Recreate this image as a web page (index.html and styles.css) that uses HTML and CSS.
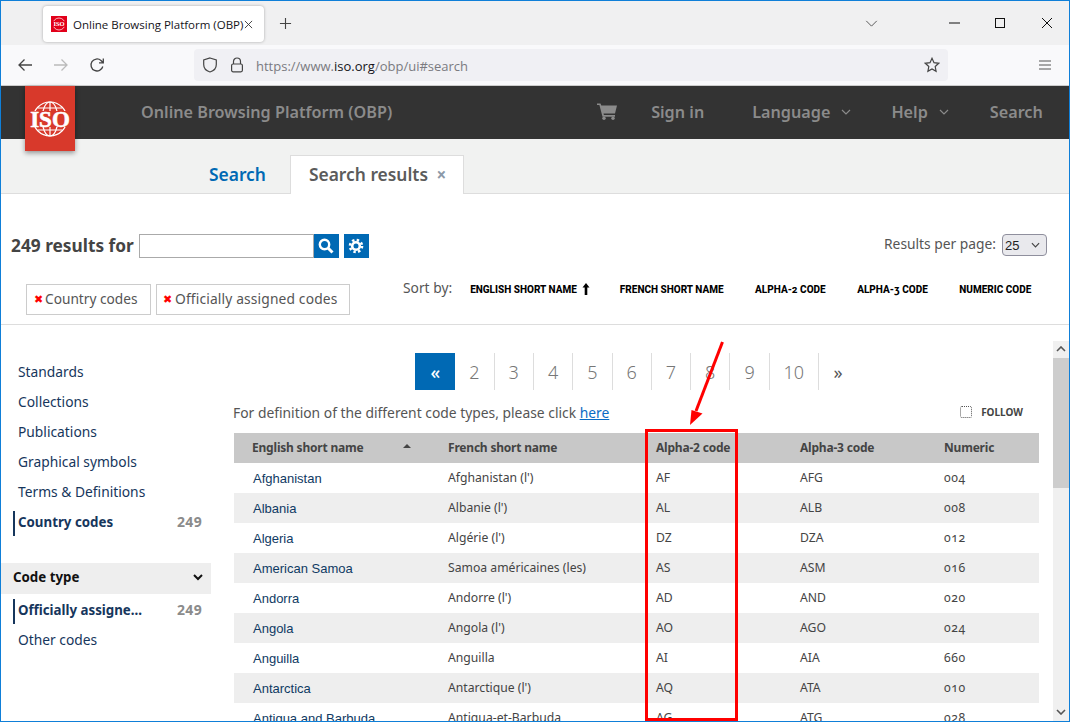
FILE: index.html
```html
<!DOCTYPE html>
<html lang="en">
<head>
<meta charset="utf-8">
<title>Online Browsing Platform (OBP)</title>
<link rel="stylesheet" href="styles.css">
</head>
<body>
<div class="window">
  <div class="tabbar">
    <div class="tab">
      <svg class="favicon" viewBox="0 0 16 16"><rect width="16" height="16" fill="#e2001a"/><circle cx="8" cy="8" r="6" fill="none" stroke="#fff" stroke-width=".7"/><rect x="1" y="5.2" width="14" height="5.6" fill="#e2001a"/><text x="8" y="10.4" class="favtext">ISO</text></svg>
      <span class="tab-title">Online Browsing Platform (OBP)</span>
      <svg class="tab-close" viewBox="0 0 10 10"><path d="M1 1l8 8M9 1l-8 8" stroke="#333" fill="none"/></svg>
    </div>
    <svg class="newtab" viewBox="0 0 14 14"><path d="M7 1v12M1 7h12" stroke="#444" stroke-width="1.2" fill="none"/></svg>
    <svg class="tablist" viewBox="0 0 14 8"><path d="M1 1l6 6 6-6" stroke="#555" stroke-width="1.1" fill="none"/></svg>
    <svg class="wc wc-min" viewBox="0 0 12 12"><path d="M0 6h11" stroke="#111" fill="none"/></svg>
    <svg class="wc wc-max" viewBox="0 0 12 12"><rect x="1.5" y="1.5" width="9" height="9" stroke="#111" fill="none"/></svg>
    <svg class="wc wc-close" viewBox="0 0 12 12"><path d="M1 1l10 10M11 1L1 11" stroke="#111" fill="none"/></svg>
  </div>

  <div class="toolbar">
    <svg class="tb tb-back" viewBox="0 0 16 16"><path d="M15 8H2M7.5 2.5L2 8l5.5 5.5" stroke="#444" stroke-width="1.3" fill="none"/></svg>
    <svg class="tb tb-fwd" viewBox="0 0 16 16"><path d="M1 8h13M8.500 2.500L14 8l-5.500 5.500" stroke="#bbb" stroke-width="1.3" fill="none"/></svg>
    <svg class="tb tb-reload" viewBox="0 0 16 16"><path d="M13.800 9.500A6 6 0 1 1 12 3.500L14 5.500M14.300 1.500v4.300h-4.300" stroke="#444" stroke-width="1.3" fill="none"/></svg>
    <div class="urlbar">
      <svg class="ub-shield" viewBox="0 0 16 16"><path d="M8 1l6.300 2v4.500C14.300 11.300 11.500 14 8 15 4.500 14 1.700 11.300 1.700 7.500V3z" stroke="#444" stroke-width="1.200" fill="none"/></svg>
      <svg class="ub-lock" viewBox="0 0 14 16"><path d="M3.500 7V4.500a3.500 3.500 0 0 1 7 0V7" stroke="#444" stroke-width="1.200" fill="none"/><rect x="1.600" y="7" width="10.800" height="7.800" rx="1.500" stroke="#444" stroke-width="1.200" fill="none"/></svg>
      <span class="url"><span class="url-dim">https://www.</span><span class="url-host">iso.org</span><span class="url-dim">/obp/ui#search</span></span>
      <svg class="ub-star" viewBox="0 0 16 16"><path d="M8 1.300l2 4.400 4.700.6-3.500 3.200.9 4.800L8 12l-4.100 2.300.9-4.800L1.300 6.300 6 5.700z" stroke="#444" stroke-width="1.200" fill="none"/></svg>
    </div>
    <svg class="tb-menu" viewBox="0 0 12 10"><path d="M0 1h12M0 5h12M0 9h12" stroke="#555" fill="none"/></svg>
  </div>

  <header class="site-header">
    <div class="logo">
      <svg viewBox="0 0 50 50" class="logo-svg">
        <g fill="none" stroke="#fff" stroke-width="1.200">
          <circle cx="25" cy="25" r="17"/>
          <ellipse cx="25" cy="25" rx="8" ry="17"/>
          <path d="M25 8v34M13 14h24M13 36h24"/>
        </g>
        <rect x="2" y="17" width="46" height="16" fill="#d8392b"/>
        <text x="25" y="33" class="logo-text">ISO</text>
      </svg>
    </div>
    <span class="site-title">Online Browsing Platform (OBP)</span>
    <nav class="site-nav">
      <svg class="cart" viewBox="0 0 20 17"><path d="M0 .5h3.500l.8 2H20l-2 8H6.500l.4 1.600H18v1.600H5.500L2.400 2.100H0z" fill="#8b8b8b"/><circle cx="7" cy="15.300" r="1.700" fill="#8b8b8b"/><circle cx="16" cy="15.300" r="1.700" fill="#8b8b8b"/></svg>
      <a class="nav-item nav-signin">Sign in</a>
      <a class="nav-item nav-lang">Language</a>
      <svg class="nav-chev" viewBox="0 0 10 6"><path d="M1 1l4 4 4-4" stroke="#8b8b8b" stroke-width="1.200" fill="none"/></svg>
      <a class="nav-item nav-help">Help</a>
      <svg class="nav-chev" viewBox="0 0 10 6"><path d="M1 1l4 4 4-4" stroke="#8b8b8b" stroke-width="1.200" fill="none"/></svg>
      <a class="nav-item nav-search">Search</a>
    </nav>
  </header>

  <div class="subnav">
    <a class="subnav-link">Search</a>
    <div class="subnav-tab">Search results <span class="subnav-x">×</span></div>
  </div>

  <section class="results-head">
    <div class="search-row">
      <h1 class="results-count">249 results for</h1>
      <input class="search-input" type="text" aria-label="Search">
      <button class="sq-btn" aria-label="Search"><svg viewBox="0 0 16 16" class="sq-icon"><circle cx="6.500" cy="6.500" r="4.700" stroke="#fff" stroke-width="2.400" fill="none"/><path d="M10 10l4.500 4.500" stroke="#fff" stroke-width="3" fill="none"/></svg></button>
      <button class="sq-btn gear-btn" aria-label="Settings"><svg viewBox="0 0 16 16" class="sq-icon"><circle cx="8" cy="8" r="6" stroke="#fff" stroke-width="2.600" stroke-dasharray="2.400 2.310" fill="none"/><circle cx="8" cy="8" r="3.800" stroke="#fff" stroke-width="2.600" fill="none"/></svg></button>
      <span class="per-page-label">Results per page:</span>
      <div class="per-page"><span>25</span><svg viewBox="0 0 10 6" class="pp-chev"><path d="M1 1l4 4 4-4" stroke="#444" stroke-width="1.300" fill="none"/></svg></div>
    </div>
    <div class="filter-row">
      <div class="chip chip-country"><span class="chip-x">✖</span>Country codes</div>
      <div class="chip chip-official"><span class="chip-x">✖</span>Officially assigned codes</div>
      <div class="sort">
        <span class="sort-label">Sort by:</span>
        <span class="sort-item sort-first">ENGLISH SHORT NAME<svg class="sort-arrow" viewBox="0 0 8 12"><path d="M4 0l3.500 4.500H5.300V12H2.700V4.500H.5z" fill="#000"/></svg></span>
        <span class="sort-item">FRENCH SHORT NAME</span>
        <span class="sort-item">ALPHA-2 CODE</span>
        <span class="sort-item">ALPHA-3 CODE</span>
        <span class="sort-item">NUMERIC CODE</span>
      </div>
    </div>
  </section>

  <main class="main">
    <aside class="sidebar">
      <a class="side-item">Standards</a>
      <a class="side-item">Collections</a>
      <a class="side-item">Publications</a>
      <a class="side-item">Graphical symbols</a>
      <a class="side-item">Terms &amp; Definitions</a>
      <a class="side-item active">Country codes<span class="side-count">249</span></a>
      <div class="side-head">Code type<svg viewBox="0 0 10 7" class="side-chev"><path d="M1 1l4 4 4-4" stroke="#111" stroke-width="2" fill="none"/></svg></div>
      <a class="side-item active">Officially assigne...<span class="side-count">249</span></a>
      <a class="side-item">Other codes</a>
    </aside>

    <div class="content">
      <div class="pager">
        <a class="page current">«</a>
        <a class="page">2</a><a class="page">3</a><a class="page">4</a><a class="page">5</a><a class="page">6</a><a class="page">7</a><a class="page">8</a><a class="page">9</a><a class="page page-10">10</a><a class="page page-next">»</a>
      </div>
      <div class="def-row">
        <span>For definition of the different code types, please click <a class="def-link">here</a></span>
        <label class="follow"><span class="follow-box"></span>FOLLOW</label>
      </div>
      <table class="codes">
        <thead>
          <tr><th class="c1">English short name<span class="sort-caret"></span></th><th class="c2">French short name</th><th class="c3">Alpha-2 code</th><th class="c4">Alpha-3 code</th><th class="c5">Numeric</th></tr>
        </thead>
        <tbody>
          <tr><td class="name">Afghanistan</td><td>Afghanistan (l')</td><td>AF</td><td>AFG</td><td class="num">004</td></tr>
          <tr><td class="name">Albania</td><td>Albanie (l')</td><td>AL</td><td>ALB</td><td class="num">008</td></tr>
          <tr><td class="name">Algeria</td><td>Algérie (l')</td><td>DZ</td><td>DZA</td><td class="num">012</td></tr>
          <tr><td class="name">American Samoa</td><td>Samoa américaines (les)</td><td>AS</td><td>ASM</td><td class="num">016</td></tr>
          <tr><td class="name">Andorra</td><td>Andorre (l')</td><td>AD</td><td>AND</td><td class="num">020</td></tr>
          <tr><td class="name">Angola</td><td>Angola (l')</td><td>AO</td><td>AGO</td><td class="num">024</td></tr>
          <tr><td class="name">Anguilla</td><td>Anguilla</td><td>AI</td><td>AIA</td><td class="num">660</td></tr>
          <tr><td class="name">Antarctica</td><td>Antarctique (l')</td><td>AQ</td><td>ATA</td><td class="num">010</td></tr>
          <tr><td class="name">Antigua and Barbuda</td><td>Antigua-et-Barbuda</td><td>AG</td><td>ATG</td><td class="num">028</td></tr>
        </tbody>
      </table>
    </div>

    <div class="scrollbar">
      <svg viewBox="0 0 10 6" class="sb-arrow"><path d="M1 5l4-4 4 4" stroke="#555" stroke-width="1.600" fill="none"/></svg>
      <div class="sb-thumb"></div>
      <svg viewBox="0 0 10 6" class="sb-arrow sb-down"><path d="M1 1l4 4 4-4" stroke="#555" stroke-width="1.600" fill="none"/></svg>
    </div>
  </main>

  <svg class="annotation" viewBox="0 0 1070 722">
    <rect x="646.500" y="430.500" width="90" height="289" fill="none" stroke="#f00" stroke-width="3"/>
    <path d="M722.500 342L696 411" stroke="#f00" stroke-width="3" fill="none"/>
    <path d="M690 425l1.500-15 11 3.500z" fill="#f00"/>
  </svg>
</div>
</body>
</html>
```

FILE: styles.css
```css
* { box-sizing: border-box; }
html, body { margin: 0; padding: 0; }
body { font-family: "Noto Sans", "Liberation Sans", sans-serif; color: #444; background: #fff; }

.window {
  position: relative;
  width: 1070px;
  height: 722px;
  border: 1px solid #0f7fd8;
  display: flex;
  flex-direction: column;
  overflow: hidden;
  background: #fff;
}

/* browser tab bar */
.tabbar {
  height: 44px;
  flex: none;
  background: #f0f0f1;
  display: flex;
  align-items: center;
  padding-left: 42px;
}
.tab {
  width: 221px;
  height: 36px;
  margin-top: 2px;
  background: #fff;
  border-radius: 4px;
  box-shadow: 0 0 3px rgba(0,0,0,.3);
  display: flex;
  align-items: center;
  padding-left: 8px;
}
.favicon { width: 16px; height: 16px; flex: none; }
.favtext { font: bold 6.500px "Liberation Serif", serif; fill: #fff; text-anchor: middle; }
.tab-title { font-family: "Open Sans", sans-serif; font-size: 11.500px; color: #15141a; margin-left: 6px; white-space: nowrap; }
.tab-close { width: 9px; height: 9px; margin-left: 1px; flex: none; }
.newtab { width: 13px; height: 13px; margin-left: 15px; flex: none; }
.tablist { width: 13px; height: 7px; margin-left: 573px; flex: none; }
.wc { width: 12px; height: 12px; flex: none; }
.wc-min { margin-left: 71px; }
.wc-max { margin-left: 33px; }
.wc-close { margin-left: 35px; }

/* browser toolbar */
.toolbar {
  height: 41px;
  flex: none;
  background: #f9f9fb;
  border-bottom: 1px solid #ccc;
  display: flex;
  align-items: center;
  padding-left: 16px;
}
.tb { width: 16px; height: 16px; flex: none; }
.tb-fwd { margin-left: 20px; }
.tb-reload { margin-left: 20px; }
.urlbar {
  width: 754px;
  height: 32px;
  margin-left: 89px;
  background: #f0f0f4;
  border-radius: 4px;
  display: flex;
  align-items: center;
  padding-left: 8px;
}
.ub-shield { width: 16px; height: 16px; flex: none; }
.ub-lock { width: 14px; height: 16px; margin-left: 12px; flex: none; }
.url { font-family: "Open Sans", sans-serif; font-size: 13px; margin: 1px 0 0 12px; white-space: nowrap; }
.url-dim { color: #7a7a80; }
.url-host { color: #15141a; }
.ub-star { width: 16px; height: 16px; margin-left: auto; margin-right: 8px; flex: none; }
.tb-menu { width: 12px; height: 10px; margin-left: 91px; flex: none; }

/* site header */
.site-header {
  height: 53px;
  flex: none;
  background: #333;
  display: flex;
  align-items: center;
  padding-bottom: 2px;
  color: #8b8b8b;
  font-weight: 600;
  font-size: 16.200px;
}
.logo {
  position: absolute;
  z-index: 2;
  left: 24px;
  top: 85px;
  width: 50px;
  height: 65px;
  background: #d8392b;
  box-shadow: 0 2px 5px rgba(0,0,0,.4);
  display: flex;
  align-items: flex-end;
  justify-content: center;
  padding-bottom: 7px;
}
.logo-svg { width: 50px; height: 50px; }
.logo-text { font: bold 23px "Liberation Serif", serif; fill: #fff; text-anchor: middle; stroke: #fff; stroke-width: .6; }
.site-title { margin-left: 140px; white-space: nowrap; }
.site-nav { display: flex; align-items: center; margin-left: 205px; }
.cart { width: 20px; height: 17px; flex: none; }
.nav-signin { margin-left: 34px; }
.nav-lang { margin-left: 48px; }
.nav-chev { width: 10px; height: 6px; margin-left: 11px; flex: none; }
.nav-help { margin-left: 40px; }
.nav-search { margin-left: 41px; }
.nav-item { white-space: nowrap; }

/* secondary nav */
.subnav {
  height: 55px;
  flex: none;
  background: #f1f2f1;
  display: flex;
  align-items: flex-end;
  padding-left: 208px;
  box-shadow: inset 0 -1px 0 #ddd;
  font-size: 17.400px;
  font-weight: 600;
}
.subnav-link { color: #0069b4; height: 39px; line-height: 38px; }
.subnav-tab {
  width: 174px;
  height: 39px;
  margin-left: 24px;
  background: #fff;
  border: 1px solid #ddd;
  border-bottom: 0;
  color: #5b5b5b;
  line-height: 36px;
  padding-left: 18px;
  white-space: nowrap;
}
.subnav-x { color: #8c99a8; font-size: 17px; margin-left: 4px; font-weight: 700; }

/* results head */
.results-head { height: 131px; flex: none; border-bottom: 1px solid #ddd; padding-top: 40px; }
.search-row { display: flex; align-items: flex-start; height: 24px; padding-left: 10px; }
.results-count { margin: 0; font-size: 17.300px; line-height: 23px; font-weight: 700; color: #444; white-space: nowrap; }
.search-input {
  width: 175px;
  height: 24px;
  margin: 0 0 0 5px;
  padding: 0;
  border: 1px solid #aaa;
  background: #fff;
  outline: 0;
}
.sq-btn {
  width: 25px;
  height: 24px;
  border: 0;
  padding: 0;
  background: #0069b4;
  display: flex;
  align-items: center;
  justify-content: center;
  flex: none;
}
.gear-btn { margin-left: 5px; }
.sq-icon { width: 16px; height: 16px; }
.per-page-label { margin-left: auto; font-size: 13.800px; line-height: 20px; color: #555; white-space: nowrap; }
.per-page {
  width: 45px;
  height: 22px;
  margin: 0 22px 0 6px;
  border: 1px solid #8f8f9d;
  border-radius: 4px;
  background: #e9e9ed;
  display: flex;
  align-items: center;
  justify-content: space-between;
  padding: 0 6px 0 2px;
  font-family: "Liberation Sans", sans-serif;
  font-size: 13px;
  color: #222;
}
.pp-chev { width: 9px; height: 6px; }

.filter-row { display: flex; align-items: flex-start; margin-top: 26px; padding-left: 25px; }
.chip {
  height: 31px;
  border: 1px solid #ccc;
  margin-right: 5px;
  display: flex;
  align-items: center;
  padding: 0 0 2px 4px;
  color: #555;
  white-space: nowrap;
}
.chip-country { width: 125px; font-size: 13.700px; }
.chip-official { width: 194px; font-size: 13.800px; letter-spacing: .15px; }
.chip-x { color: #f00; font-size: 11px; width: 14px; text-align: center; }
.sort { display: flex; align-items: center; height: 20px; margin: -5px 0 0 48px; }
.sort-label { font-size: 13.800px; color: #555; margin: 0 18px 4px 0; white-space: nowrap; }
.sort-item {
  font-family: "Roboto", sans-serif;
  font-size: 10px;
  font-weight: 800;
  color: #000;
  white-space: nowrap;
  margin-right: 31.500px;
  display: flex;
  align-items: center;
  font-variant-numeric: oldstyle-nums;
}
.sort-arrow { width: 8px; height: 12px; margin-left: 5px; }
.sort-first { margin-right: 30px; }

/* main */
.main { flex: 1; min-height: 0; display: flex; overflow: hidden; }
.sidebar { width: 210px; flex: none; padding: 31px 9px 0 0; }
.side-item {
  display: flex;
  justify-content: space-between;
  height: 25px;
  line-height: 22px;
  margin: 5px 0 0 12px;
  padding-left: 3px;
  border-left: 2px solid transparent;
  font-size: 13.800px;
  color: #16365c;
  white-space: nowrap;
}
.side-item.active { border-left-color: #16365c; font-weight: 700; font-size: 13.300px; }
.side-count { color: #8b8b8b; font-weight: 700; font-size: 14px; letter-spacing: .3px; }
.side-head {
  height: 31px;
  margin: 27px -9px 0 0;
  background: #eee;
  display: flex;
  align-items: center;
  justify-content: space-between;
  padding: 0 8px 3px 12px;
  font-size: 13.300px;
  font-weight: 700;
  color: #111;
}
.side-chev { width: 10px; height: 7px; }

.content { flex: 1; min-width: 0; padding: 28px 13px 0 22px; }
.pager { display: flex; height: 37px; justify-content: center; }
.page {
  width: 39.300px;
  height: 37px;
  border-right: 1px solid #ddd;
  text-align: center;
  font-size: 18px;
  line-height: 38px;
  color: #777;
  font-weight: 300;
}
.page.current { width: 40px; background: #0069b4; color: #fff; border: 0; font-size: 18px; font-weight: 500; }
.page-10 { width: 49px; }
.page-next { width: 39px; border: 0; font-size: 18px; color: #555; font-weight: 400; }
.def-row {
  display: flex;
  justify-content: space-between;
  align-items: center;
  height: 20px;
  margin-top: 12px;
  font-size: 13.850px;
  color: #555;
  white-space: nowrap;
}
.def-link { color: #0b6bc4; text-decoration: underline; }
.follow { display: flex; align-items: center; font-size: 10px; font-weight: 700; color: #444; margin-right: 17px; }
.follow-box { width: 12px; height: 12px; border: 1px dotted #555; border-radius: 2px; margin-right: 9px; }

.codes {
  width: 805px;
  margin: 11px 0 0 1px;
  border-collapse: collapse;
  table-layout: fixed;
}
.codes th, .codes td { height: 30px; padding: 0 0 0 18px; text-align: left; white-space: nowrap; }
.codes th { background: #c8c8c8; font-size: 12px; letter-spacing: -.2px; font-weight: 700; color: #444; position: relative; padding-bottom: 2px; }
.codes td { font-size: 12.200px; color: #444; padding-bottom: 1px; }
.codes tbody tr:nth-child(even) td { background: #eee; }
.codes td.name { font-family: "Liberation Sans", sans-serif; font-size: 13px; color: #0f3a63; padding-left: 19px; padding-bottom: 0; }
.codes td.num { font-variant-numeric: oldstyle-nums; letter-spacing: .6px; }
.c1 { width: 196px; }
.c2 { width: 208px; }
.c3, .c4 { width: 144px; }
.c5 { width: 113px; }
.sort-caret {
  position: absolute;
  left: 169px;
  top: 11px;
  border: 4px solid transparent;
  border-top: 0;
  border-bottom: 4px solid #444;
}

.scrollbar {
  width: 16px;
  flex: none;
  margin-top: 16px;
  background: #f0f0f0;
  display: flex;
  flex-direction: column;
  align-items: center;
}
.sb-arrow { width: 10px; height: 6px; margin-top: 5px; flex: none; }
.sb-thumb { width: 16px; height: 130px; margin-top: 6px; background: #cdcdcd; flex: none; }
.sb-down { margin-top: auto; margin-bottom: 6px; }

.annotation { position: absolute; left: -1px; top: -1px; width: 1070px; height: 722px; pointer-events: none; }
```
